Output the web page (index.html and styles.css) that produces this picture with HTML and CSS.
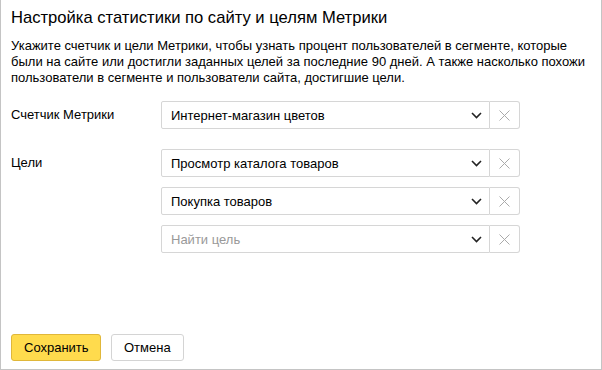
FILE: index.html
```html
<!DOCTYPE html>
<html lang="ru">
<head>
<meta charset="utf-8">
<link rel="stylesheet" href="styles.css">
</head>
<body>
<div class="dialog">
  <h1 class="title">Настройка статистики по сайту и целям Метрики</h1>
  <p class="desc">Укажите счетчик и цели Метрики, чтобы узнать процент пользователей в сегменте, которые были на сайте или достигли заданных целей за последние 90 дней. А также насколько похожи пользователи в сегменте и пользователи сайта, достигшие цели.</p>
  <div class="form">
    <div class="row row-counter">
      <div class="label">Счетчик Метрики</div>
      <div class="fields">
        <div class="group">
          <div class="select"><span class="value">Интернет-магазин цветов</span>
            <svg class="chev" width="11" height="7" viewBox="0 0 11 7"><path d="M1 1 L5.5 5.5 L10 1" fill="none" stroke="#222" stroke-width="1.6"/></svg>
          </div>
          <div class="clear"><svg width="11" height="11" viewBox="0 0 11 11"><path d="M0.5 0.5 L10.5 10.5 M10.5 0.5 L0.5 10.5" stroke="#aaa" stroke-width="1"/></svg></div>
        </div>
      </div>
    </div>
    <div class="row row-goals">
      <div class="label">Цели</div>
      <div class="fields">
        <div class="group">
          <div class="select"><span class="value">Просмотр каталога товаров</span>
            <svg class="chev" width="11" height="7" viewBox="0 0 11 7"><path d="M1 1 L5.5 5.5 L10 1" fill="none" stroke="#222" stroke-width="1.6"/></svg>
          </div>
          <div class="clear"><svg width="11" height="11" viewBox="0 0 11 11"><path d="M0.5 0.5 L10.5 10.5 M10.5 0.5 L0.5 10.5" stroke="#aaa" stroke-width="1"/></svg></div>
        </div>
        <div class="group">
          <div class="select"><span class="value">Покупка товаров</span>
            <svg class="chev" width="11" height="7" viewBox="0 0 11 7"><path d="M1 1 L5.5 5.5 L10 1" fill="none" stroke="#222" stroke-width="1.6"/></svg>
          </div>
          <div class="clear"><svg width="11" height="11" viewBox="0 0 11 11"><path d="M0.5 0.5 L10.5 10.5 M10.5 0.5 L0.5 10.5" stroke="#aaa" stroke-width="1"/></svg></div>
        </div>
        <div class="group">
          <div class="select"><span class="value placeholder">Найти цель</span>
            <svg class="chev" width="11" height="7" viewBox="0 0 11 7"><path d="M1 1 L5.5 5.5 L10 1" fill="none" stroke="#222" stroke-width="1.6"/></svg>
          </div>
          <div class="clear"><svg width="11" height="11" viewBox="0 0 11 11"><path d="M0.5 0.5 L10.5 10.5 M10.5 0.5 L0.5 10.5" stroke="#aaa" stroke-width="1"/></svg></div>
        </div>
      </div>
    </div>
  </div>
  <div class="footer">
    <button class="btn btn-primary">Сохранить</button>
    <button class="btn">Отмена</button>
  </div>
</div>
</body>
</html>
```
FILE: styles.css
```css
html, body {
  margin: 0;
  padding: 0;
  background: #fff;
}
body {
  font-family: "Liberation Sans", Arial, sans-serif;
  color: #000;
}
.dialog {
  width: 602px;
  height: 370px;
  box-sizing: border-box;
  border: 1px solid #c4c4c4;
  border-top: none;
  padding: 6px 10px 8px 10px;
  display: flex;
  flex-direction: column;
}
.title {
  margin: 0;
  font-size: 16.6px;
  font-weight: normal;
  line-height: 24px;
  color: #000;
}
.desc {
  margin: 8px 0 0 0;
  font-size: 13px;
  line-height: 16px;
  color: #000;
}
.form {
  margin-top: 15px;
  display: flex;
  flex-direction: column;
  gap: 20px;
}
.row {
  display: flex;
}
.label {
  width: 150px;
  flex: none;
  font-size: 13px;
  line-height: 27px;
  color: #000;
}
.fields {
  display: flex;
  flex-direction: column;
  gap: 10px;
}
.group {
  display: flex;
  width: 359px;
  height: 28px;
}
.select {
  flex: 1;
  display: flex;
  align-items: center;
  border: 1px solid #d6d6d6;
  border-radius: 2px 0 0 2px;
  padding: 0 7px 0 9px;
  font-size: 13px;
}
.value {
  flex: 1;
}
.placeholder {
  color: #999;
}
.chev {
  display: block;
}
.clear {
  width: 29px;
  flex: none;
  display: flex;
  align-items: center;
  justify-content: center;
  border: 1px solid #d6d6d6;
  border-left: none;
  border-radius: 0 3px 3px 0;
}
.clear svg {
  display: block;
}
.footer {
  margin-top: auto;
  display: flex;
  gap: 10px;
}
.btn {
  height: 27px;
  box-sizing: border-box;
  border: 1px solid #d4d4d4;
  border-radius: 3px;
  background: #fff;
  font-family: "Liberation Sans", Arial, sans-serif;
  font-size: 13px;
  color: #000;
  padding: 0 12px;
  cursor: pointer;
}
.btn-primary {
  width: 90px;
  background: #ffdb4d;
  border-color: #e0b73a;
}
```
